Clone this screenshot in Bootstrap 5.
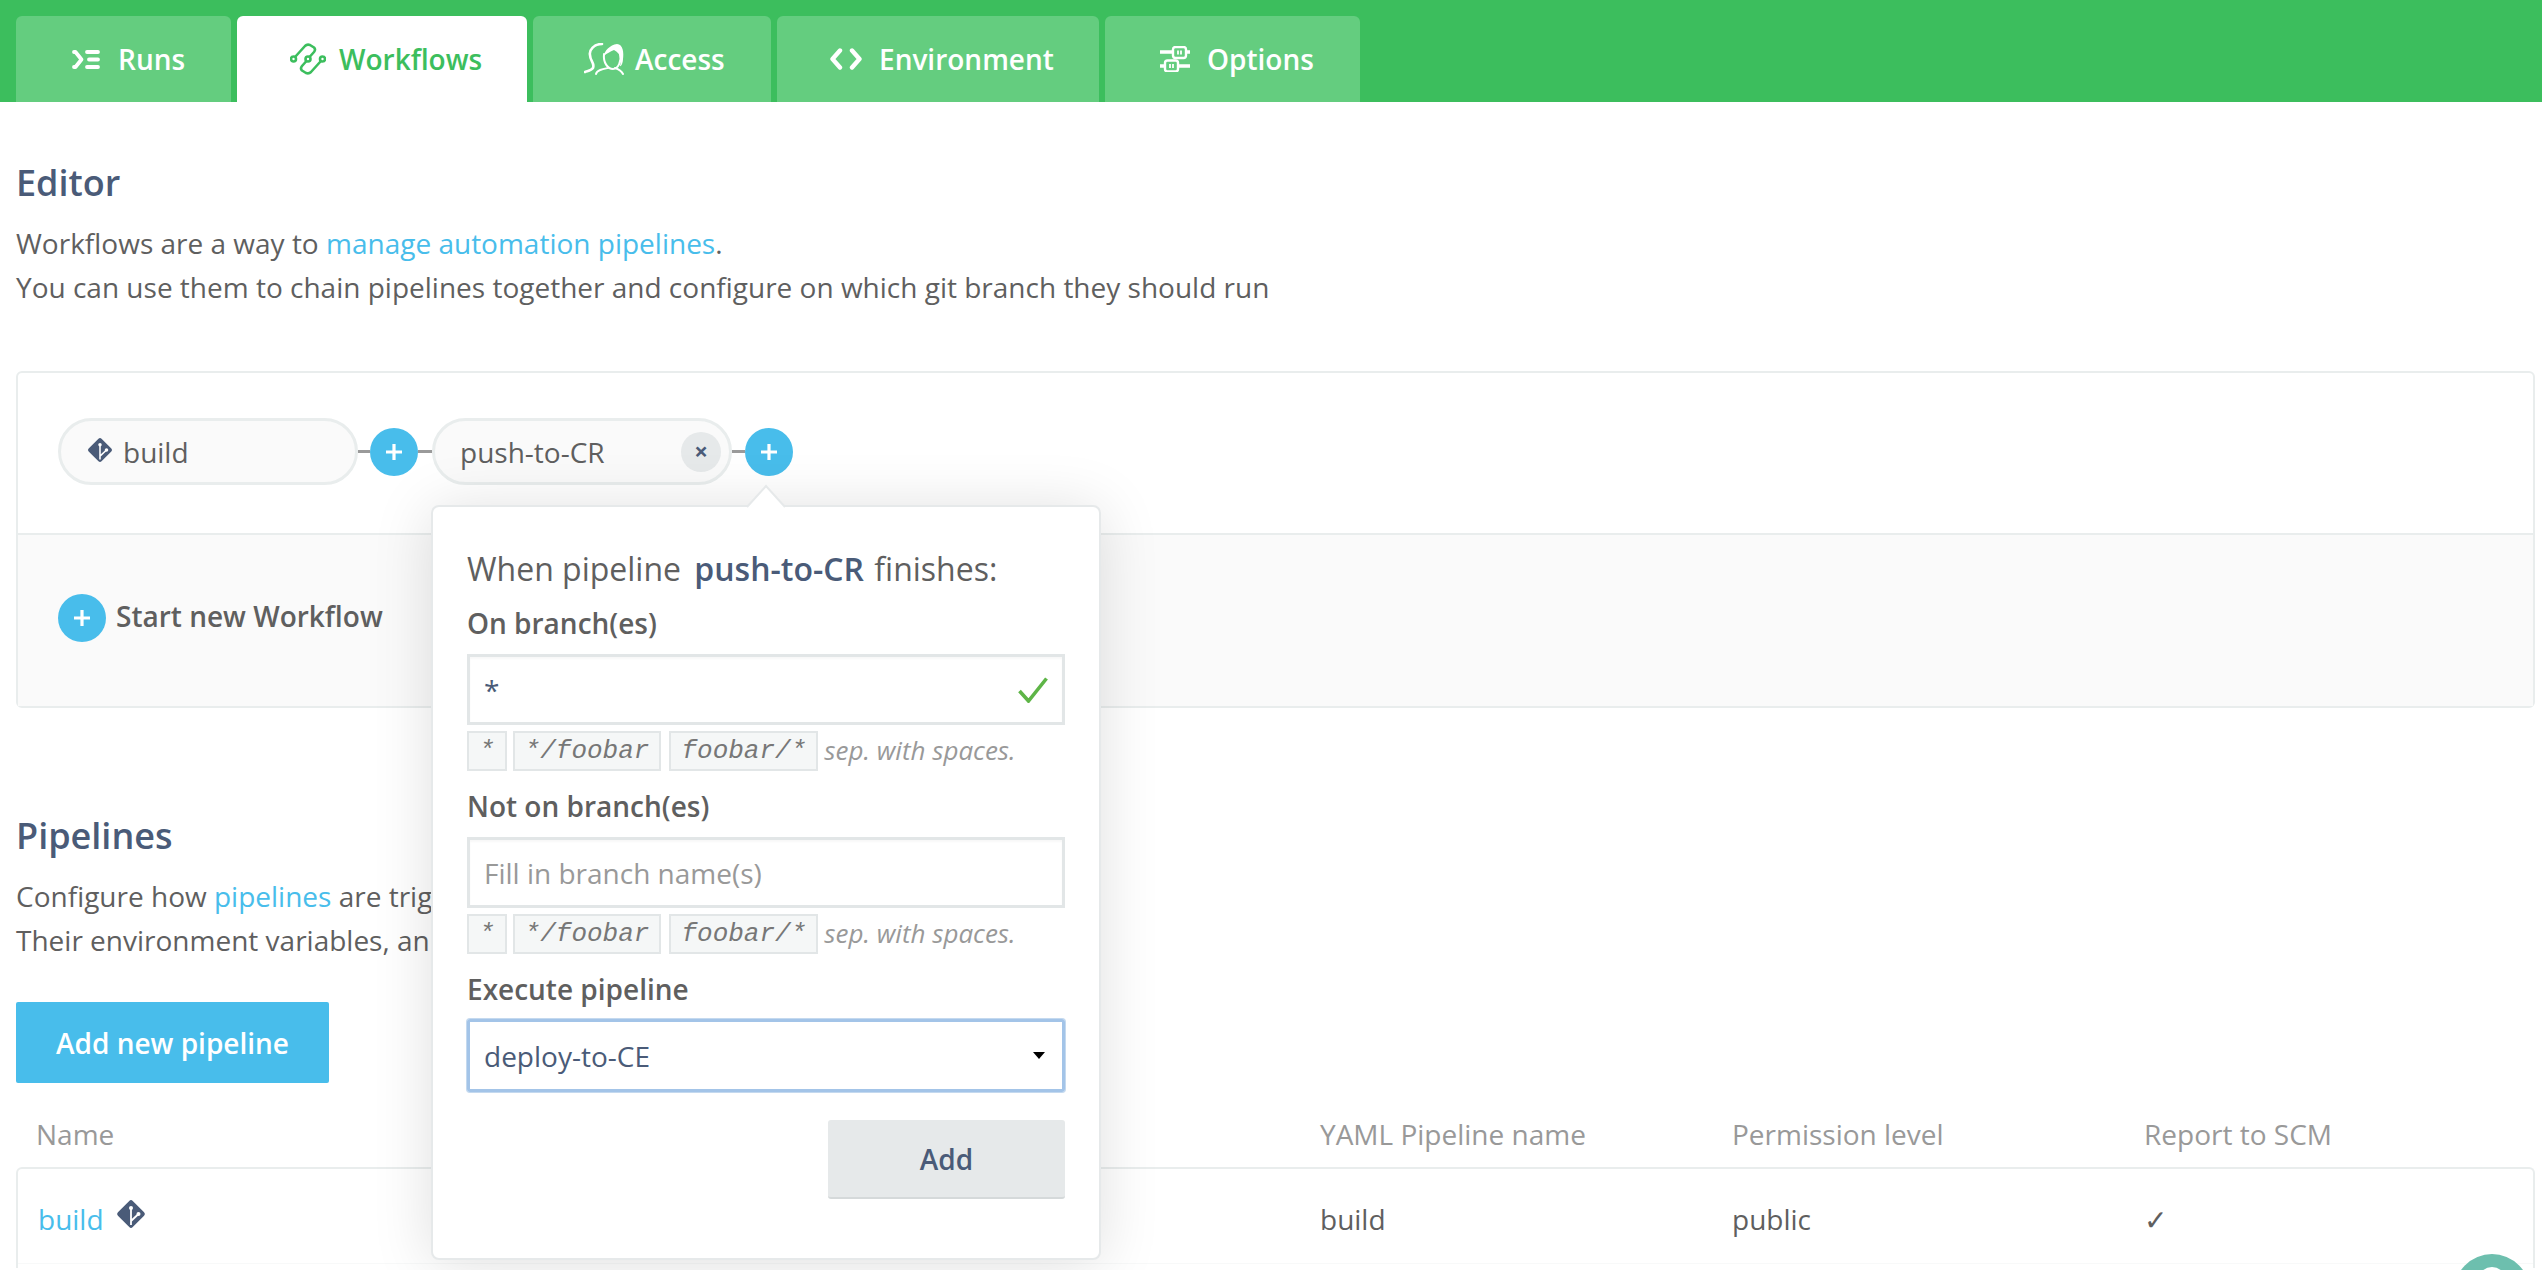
<!DOCTYPE html>
<html lang="en">
<head>
  <meta charset="UTF-8">
  <title>Workflows</title>
  <link href="https://cdn.jsdelivr.net/npm/bootstrap@5.3.3/dist/css/bootstrap.min.css" rel="stylesheet">
  <style>
    html, body { height: 100%; overflow: hidden; }
    body { font-family: "Open Sans", sans-serif; font-size: 28px; line-height: 44px; color: #5f5f5f; background: #fff; }
    a { color: #48bdeb; text-decoration: none; }
    .topbar { background: #3cbe5d; height: 102px; padding: 16px 0 0 16px; gap: 6px; }
    .tab-item { height: 86px; background: #64cd7f; color: #fff; border-radius: 6px 6px 0 0; font-size: 28px; font-weight: 600; }
    .tab-item.on { background: #fff; color: #3cbe5d; }
    .tab-item svg { flex: none; }
    .t1 { width: 215px; padding-left: 56px; gap: 18px; }
    .t2 { width: 290px; padding-left: 53px; gap: 13px; }
    .t3 { width: 238px; padding-left: 51px; gap: 11px; }
    .t4 { width: 322px; padding-left: 53px; gap: 17px; }
    .t5 { width: 255px; padding-left: 55px; gap: 17px; }
    .main-wrap { height: 1168px; padding: 0 7px 0 16px; position: relative; }
    .sec-title { font-size: 36px; font-weight: 600; color: #4a5b78; line-height: 46px; margin: 0; }
    .title-a { padding-top: 58px; }
    .title-b { margin-top: 105px; }
    .sec-text { margin: 15px 0 0; }
    .wf-box { margin-top: 62px; height: 337px; border: 2px solid #e9eded; border-radius: 6px; }
    .wf-top { height: 162px; padding: 45px 0 0 40px; border-bottom: 2px solid #e9eded; }
    .wf-row { height: 67px; }
    .wf-low { height: 171px; background: #fafafa; padding: 59px 0 0 40px; font-weight: 600; gap: 10px; }
    .pill-box { width: 300px; height: 67px; border: 3px solid #e9eded; border-radius: 34px; background: #fafafa; padding: 0 8px 0 25px; gap: 10px; }
    .pill-first { padding-left: 26px; gap: 10px; }
    .conn { height: 3px; background: #9a9a9a; flex: none; }
    .c12 { width: 12px; } .c13 { width: 13px; } .c14 { width: 14px; }
    .plus-dot { width: 48px; height: 48px; border-radius: 50%; background: #48bdeb; flex: none; }
    .x-dot { width: 40px; height: 40px; border-radius: 50%; background: #e6e9ea; color: #4a5b78; font-size: 24px; font-weight: 700; line-height: 37px; text-align: center; }
    .pop-box { position: absolute; left: 431px; top: 403px; width: 670px; height: 755px; background: #fff; border: 2px solid #e6e9ea; border-radius: 8px; padding: 40px 34px; box-shadow: 0 4px 60px rgba(0,0,0,.13); z-index: 5; }
    .pop-arrow { position: absolute; left: 314px; top: -22px; overflow: visible; }
    .pop-head { font-size: 32px; line-height: 44px; margin-bottom: 12px; white-space: nowrap; }
    .pop-head b { font-weight: 600; color: #4a5b78; margin: 0 2px 0 5px; }
    .fld-label { font-weight: 600; line-height: 40px; margin-bottom: 11px; }
    .fld-input { height: 71px; border: 3px solid #e2e6e7; padding: 0 14px; color: #4a5b78; justify-content: space-between; box-shadow: inset 0 2px 2px rgba(0,0,0,.03); }
    .fld-input.ph { color: #999; }
    .fld-input.focus { height: 73px; margin-top: -1px; border-color: #a3c4e8; border-radius: 3px; padding-right: 17px; box-shadow: 0 0 0 1px #c4d9ef; }
    .hint-row { gap: 6px; margin-top: 6px; height: 40px; font-size: 26px; line-height: 38px; font-style: italic; color: #999; margin-bottom: 15px; white-space: nowrap; }
    .hint-row code { font-family: "Liberation Mono", monospace; font-size: 26px; font-style: italic; color: #777; background: #f5f7f7; border: 2px solid #e2e6e7; padding: 0 10px; line-height: 36px; height: 40px; }
    .hint-row code + code + code { margin-left: 2px; }
    .add-btn { width: 237px; height: 79px; margin: 28px 0 0 auto; background: #e6e9ea; color: #4a5b78; font-weight: 600; font-size: 28px; border: 0; border-bottom: 2px solid #d5d9da; border-radius: 3px; }
    .new-btn { width: 313px; height: 81px; background: #48bdeb; color: #fff; font-size: 28px; font-weight: 600; border: 0; border-radius: 2px; margin-top: 40px; display: block; }
    .col-head { color: #999; height: 55px; margin-top: 29px; }
    .col-head .cell-a { width: 1304px; }
    .pipe-box { height: 101px; border: 2px solid #e9eded; border-bottom: 0; border-radius: 6px 6px 0 0; }
    .pipe-row { height: 95px; padding-top: 28px; border-bottom: 1px solid #f8f9f9; }
    .cell-a { width: 1302px; padding-left: 20px; }
    .cell-b { width: 412px; }
    .git-mark { margin-top: 2px; margin-left: 4px; }
    .help-clip { position: absolute; left: 2454px; top: 1254px; width: 76px; height: 16px; overflow: hidden; z-index: 9; }
    .help-dot { width: 76px; height: 76px; border-radius: 50%; background: #6dbfae; padding: 13px 0 0 24px; }
    .help-dot i { display: block; width: 28px; height: 28px; border-radius: 50%; background: #fff; }
  </style>
</head>
<body>
  <nav class="topbar d-flex">
    <div class="tab-item t1 d-flex align-items-center">
      <svg width="28" height="19" viewBox="0 0 28 19" fill="none" stroke="#fff" stroke-width="3.800" stroke-linecap="round" stroke-linejoin="round"><path d="M2 2h1.500l6 7.500-6 7.500H2"/><path d="M15 2h11M17 9.500h9M15 17h11"/></svg>
      <span>Runs</span>
    </div>
    <div class="tab-item t2 on d-flex align-items-center">
      <svg width="36" height="32" viewBox="0 0 36 32" fill="none" stroke="#3cbe5d" stroke-width="2.600" stroke-linecap="round" stroke-linejoin="round"><path d="M5.500 13.500L15 3q2-2 5-1l4 2.500q2 2 0 4.500l-4 4.500"/><path d="M30.500 18.500L21 29q-2 2-5 1l-4-2.500q-2-2 0-4.500l4-4.500"/><circle cx="3.500" cy="16" r="2.500"/><circle cx="18" cy="16" r="2.500"/><circle cx="32.500" cy="16" r="2.500"/></svg>
      <span>Workflows</span>
    </div>
    <div class="tab-item t3 d-flex align-items-center">
      <svg width="40" height="32" viewBox="0 0 40 32" fill="none" stroke="#fff" stroke-width="2" stroke-linecap="round"><path d="M18 1C10 1 5 7 6 12c0 6 5 8 3 13-2 3-7 3-8 4" stroke-width="2.600"/><path d="M20 11c-1 9 4 15 9 15s9-8 7-15"/><path d="M33 1c6 0 7 9 6 15 0 4-2 8-3 7 2-7 1-12-6-16-4 2-7 3-10 6 0-5 6-11 13-12z" fill="#fff" stroke="none"/><path d="M12 31c1-4 7-5 12-6M39 31c-2-4-5-5-8-6"/></svg>
      <span>Access</span>
    </div>
    <div class="tab-item t4 d-flex align-items-center">
      <svg width="32" height="22" viewBox="0 0 32 22" fill="none" stroke="#fff" stroke-width="4.400" stroke-linecap="round" stroke-linejoin="round"><path d="M10 2.500L2.500 11l7.500 8.500M22 2.500L29.500 11 22 19.500"/></svg>
      <span>Environment</span>
    </div>
    <div class="tab-item t5 d-flex align-items-center">
      <svg width="30" height="26" viewBox="0 0 30 26" fill="none" stroke="#fff"><path d="M0 6h30M0 20h30" stroke-width="3.600"/><rect x="13" y="1" width="13" height="11" rx="2.500" fill="#64cd7f" stroke-width="2.400"/><rect x="5" y="14.500" width="13" height="11" rx="2.500" fill="#64cd7f" stroke-width="2.400"/><path d="M18 4.500v4M21 4.500v4M10 18v4M13 18v4" stroke-width="1.800"/></svg>
      <span>Options</span>
    </div>
  </nav>

  <div class="main-wrap">
    <h2 class="sec-title title-a">Editor</h2>
    <p class="sec-text">Workflows are a way to <a href="#">manage automation pipelines</a>.<br>You can use them to chain pipelines together and configure on which git branch they should run</p>

    <div class="wf-box">
      <div class="wf-top">
        <div class="wf-row d-flex align-items-center">
          <div class="pill-box pill-first d-flex align-items-center">
            <svg class="mb-1" width="26" height="26" viewBox="0 0 30 30"><rect x="4.500" y="4.500" width="21" height="21" rx="2.500" transform="rotate(45 15 15)" fill="#4a5b78"/><path d="M15 9v17M22.500 15L15 22" stroke="#fff" stroke-width="1.800" fill="none"/><circle cx="15" cy="9" r="2" fill="#fff"/><circle cx="22.500" cy="15" r="2" fill="#fff"/></svg>
            <span>build</span>
          </div>
          <span class="conn c12"></span>
          <span class="plus-dot d-flex align-items-center justify-content-center"><svg width="20" height="20" viewBox="0 0 20 20"><path d="M10 2v16M2 10h16" stroke="#fff" stroke-width="3.200"/></svg></span>
          <span class="conn c14"></span>
          <div class="pill-box d-flex align-items-center justify-content-between">
            <span>push-to-CR</span>
            <span class="x-dot">×</span>
          </div>
          <span class="conn c13"></span>
          <span class="plus-dot d-flex align-items-center justify-content-center"><svg width="20" height="20" viewBox="0 0 20 20"><path d="M10 2v16M2 10h16" stroke="#fff" stroke-width="3.200"/></svg></span>
        </div>
      </div>
      <div class="wf-low d-flex align-items-start">
        <span class="plus-dot d-flex align-items-center justify-content-center"><svg width="20" height="20" viewBox="0 0 20 20"><path d="M10 2v16M2 10h16" stroke="#fff" stroke-width="3.200"/></svg></span>
        <span>Start new Workflow</span>
      </div>
    </div>

    <h2 class="sec-title title-b">Pipelines</h2>
    <div class="sec-text">
      <div>Configure how <a href="#">pipelines</a> are trig</div>
      <div>Their environment variables, an</div>
    </div>
    <button class="new-btn">Add new pipeline</button>

    <div class="col-head d-flex">
      <div class="cell-a">Name</div>
      <div class="cell-b">YAML Pipeline name</div>
      <div class="cell-b">Permission level</div>
      <div>Report to SCM</div>
    </div>
    <div class="pipe-box">
      <div class="pipe-row d-flex">
        <div class="cell-a d-flex align-items-start gap-2">
          <a href="#">build</a>
          <svg class="git-mark" width="30" height="30" viewBox="0 0 30 30"><rect x="4.500" y="4.500" width="21" height="21" rx="2.500" transform="rotate(45 15 15)" fill="#4a5b78"/><path d="M15 9v17M22.500 15L15 22" stroke="#fff" stroke-width="1.800" fill="none"/><circle cx="15" cy="9" r="2" fill="#fff"/><circle cx="22.500" cy="15" r="2" fill="#fff"/></svg>
        </div>
        <div class="cell-b">build</div>
        <div class="cell-b">public</div>
        <div>✓</div>
      </div>
    </div>

    <div class="pop-box">
      <svg class="pop-arrow" width="38" height="22" viewBox="0 0 38 22"><path d="M0 22L19 1l19 21" fill="#fff" stroke="#e6e9ea" stroke-width="2"/></svg>
      <div class="pop-head">When pipeline <b>push-to-CR</b> finishes:</div>
      <div class="fld-label">On branch(es)</div>
      <div class="fld-input d-flex align-items-center"><span>*</span><svg width="30" height="26" viewBox="0 0 30 26" fill="none"><path d="M1.500 14l9 10L28.500 1.500" stroke="#5eb547" stroke-width="3.600"/></svg></div>
      <div class="hint-row d-flex"><code>*</code><code>*/foobar</code><code>foobar/*</code><span>sep. with spaces.</span></div>
      <div class="fld-label">Not on branch(es)</div>
      <div class="fld-input ph d-flex align-items-center">Fill in branch name(s)</div>
      <div class="hint-row d-flex"><code>*</code><code>*/foobar</code><code>foobar/*</code><span>sep. with spaces.</span></div>
      <div class="fld-label">Execute pipeline</div>
      <div class="fld-input focus d-flex align-items-center"><span>deploy-to-CE</span><svg width="12" height="7" viewBox="0 0 12 7"><path d="M0 0h12L6 7z" fill="#000"/></svg></div>
      <button class="add-btn d-block">Add</button>
    </div>
  </div>
  <div class="help-clip"><div class="help-dot"><i></i></div></div>

  <script src="https://cdn.jsdelivr.net/npm/bootstrap@5.3.3/dist/js/bootstrap.bundle.min.js"></script>
</body>
</html>
